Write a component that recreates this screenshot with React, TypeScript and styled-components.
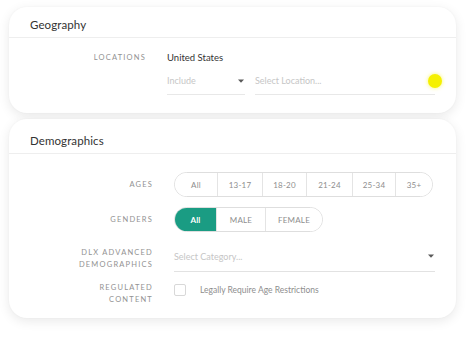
import styled, { createGlobalStyle } from 'styled-components';

const GlobalStyle = createGlobalStyle`
	body {
		margin: 0;
		background: #ffffff;
		font-family: Lato, 'Open Sans', sans-serif;
	}
`;

const ages = ['All', '13-17', '18-20', '21-24', '25-34', '35+'];
const ageWidths = [42, 45, 44, 46, 43, 37];
const genders = ['All', 'MALE', 'FEMALE'];
const genderWidths = [41, 49, 57];

const Caret = () => (
	<svg width="6" height="4" viewBox="0 0 6 4">
		<path d="M0 0.5 L6 0.5 L3 3.8 Z" fill="#5a5a5a" />
	</svg>
);

const App = () => {
	return (
		<Page>
			<GlobalStyle />
			<Card height={106}>
				<CardHeader height={31} top={11}>
					Geography
				</CardHeader>
				<CardBody labelWidth={137} top={14}>
					<Label align="start">LOCATIONS</Label>
					<Values>
						<Value>United States</Value>
						<SelectRow>
							<Select width={78}>
								<Placeholder>Include</Placeholder>
								<Caret />
							</Select>
							<Select grow>
								<Placeholder>Select Location...</Placeholder>
							</Select>
							<Cursor />
						</SelectRow>
					</Values>
				</CardBody>
			</Card>
			<Card height={199}>
				<CardHeader height={35} top={15}>
					Demographics
				</CardHeader>
				<CardBody labelWidth={144} top={18}>
					<Label>AGES</Label>
					<Pill>
						{ages.map((age, idx) => (
							<Segment key={age} width={ageWidths[idx]}>
								{age}
							</Segment>
						))}
					</Pill>
					<Label>GENDERS</Label>
					<Pill>
						{genders.map((g, idx) => (
							<Segment key={g} width={genderWidths[idx]} active={idx === 0}>
								{g}
							</Segment>
						))}
					</Pill>
					<Label align="end">
						DLX ADVANCED
						<br />
						DEMOGRAPHICS
					</Label>
					<CategorySelect>
						<Placeholder>Select Category...</Placeholder>
						<Caret />
					</CategorySelect>
					<Label>
						REGULATED
						<br />
						CONTENT
					</Label>
					<CheckRow>
						<Checkbox />
						<CheckText>Legally Require Age Restrictions</CheckText>
					</CheckRow>
				</CardBody>
			</Card>
		</Page>
	);
};
export default App;

const Page = styled.div`
	width: 474px;
	height: 346px;
	box-sizing: border-box;
	padding: 7px 0 0 9px;
	display: flex;
	flex-direction: column;
	gap: 6px;
	overflow: hidden;
`;

const Card = styled.section<{ height: number }>`
	width: 447px;
	height: ${({ height }) => height}px;
	box-sizing: border-box;
	background: #fff;
	border-radius: 18px;
	box-shadow: 0 3px 12px rgba(0, 0, 0, 0.09), 0 0 2px rgba(0, 0, 0, 0.04);
	display: flex;
	flex-direction: column;
	position: relative;
`;

const CardHeader = styled.div<{ height: number; top: number }>`
	height: ${({ height }) => height}px;
	box-sizing: border-box;
	padding: ${({ top }) => top}px 0 0 21px;
	border-bottom: 1px solid #eeeeee;
	font-size: 11.5px;
	color: #333;
	letter-spacing: 0.1px;
`;

const CardBody = styled.div<{ labelWidth: number; top: number }>`
	display: grid;
	grid-template-columns: ${({ labelWidth }) => labelWidth}px 1fr;
	column-gap: 21px;
	row-gap: 10px;
	align-items: center;
	padding: ${({ top }) => top}px 21px 0 0;
`;

const Label = styled.div<{ align?: 'start' | 'center' | 'end' }>`
	text-align: right;
	font-size: 7.5px;
	line-height: ${({ align }) => (align === 'start' ? '12px' : '11.5px')};
	letter-spacing: 1.2px;
	color: #929292;
	align-self: ${({ align }) => align ?? 'center'};
	margin-bottom: ${({ align }) => (align === 'end' ? '2px' : '0')};
`;

const Values = styled.div`
	display: flex;
	flex-direction: column;
	gap: 5px;
`;

const Value = styled.div`
	font-size: 9.5px;
	color: #333;
	line-height: 12px;
`;

const SelectRow = styled.div`
	display: flex;
	gap: 10px;
	position: relative;
`;

const Select = styled.div<{ width?: number; grow?: boolean }>`
	width: ${({ width }) => (width ? `${width}px` : 'auto')};
	flex: ${({ grow }) => (grow ? 1 : 'none')};
	height: 26px;
	box-sizing: border-box;
	border-bottom: 1px solid #e8e8e8;
	display: flex;
	align-items: center;
	justify-content: space-between;
	padding: 0 1px 2px 0;
`;

const Placeholder = styled.span`
	font-size: 9px;
	color: #c6c6c6;
`;

const Cursor = styled.div`
	position: absolute;
	right: -7px;
	top: 5px;
	width: 14px;
	height: 14px;
	border-radius: 50%;
	background: #f5f000;
	box-shadow: 0 0 4px rgba(245, 240, 0, 0.6);
`;

const Pill = styled.div`
	display: flex;
	height: 25px;
	box-sizing: border-box;
	border: 1px solid #dedede;
	border-radius: 13px;
	overflow: hidden;
	justify-self: start;
`;

const Segment = styled.div<{ width: number; active?: boolean }>`
	width: ${({ width }) => width}px;
	box-sizing: border-box;
	display: flex;
	align-items: center;
	justify-content: center;
	font-size: 8px;
	letter-spacing: 0.2px;
	color: ${({ active }) => (active ? '#fff' : '#8e8e8e')};
	background: ${({ active }) => (active ? '#1a9c83' : '#fff')};
	font-weight: ${({ active }) => (active ? 700 : 400)};
	border-left: 1px solid #e4e4e4;
	&:first-child {
		border-left: none;
	}
`;

const CategorySelect = styled.div`
	height: 26px;
	box-sizing: border-box;
	border-bottom: 1px solid #e2e2e2;
	display: flex;
	align-items: center;
	justify-content: space-between;
	padding: 0 1px 5px 0;
	margin-top: 4px;
`;

const CheckRow = styled.div`
	display: flex;
	align-items: center;
	gap: 14px;
	margin-top: -7px;
`;

const Checkbox = styled.div`
	width: 12px;
	height: 12px;
	box-sizing: border-box;
	border: 1px solid #d8d8d8;
	border-radius: 2px;
`;

const CheckText = styled.span`
	font-size: 8.5px;
	color: #8e8e8e;
`;
